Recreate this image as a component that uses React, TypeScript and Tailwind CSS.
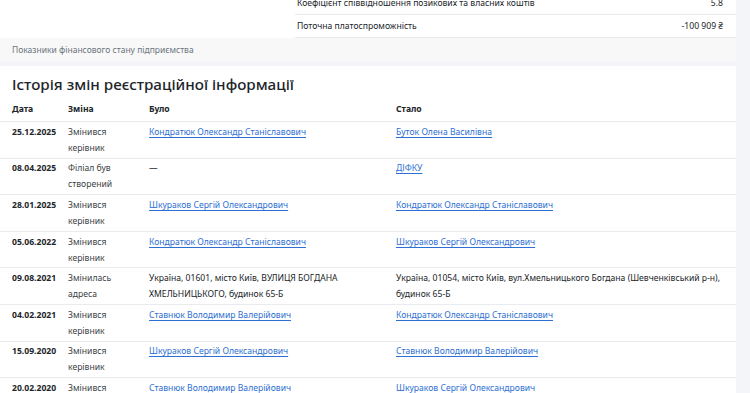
import React from "react";

const LINK = "text-[#2d6fd3] underline underline-offset-[1.5px] decoration-[1px]";

type Cell = { text: React.ReactNode; link?: boolean };
type Row = { date: string; change: React.ReactNode; was: Cell; now: Cell };

const rows: Row[] = [
  {
    date: "25.12.2025",
    change: <>Змінився<br />керівник</>,
    was: { text: "Кондратюк Олександр Станіславович", link: true },
    now: { text: "Буток Олена Василівна", link: true },
  },
  {
    date: "08.04.2025",
    change: <>Філіал був<br />створений</>,
    was: { text: "—" },
    now: { text: "ДІФКУ", link: true },
  },
  {
    date: "28.01.2025",
    change: <>Змінився<br />керівник</>,
    was: { text: "Шкураков Сергій Олександрович", link: true },
    now: { text: "Кондратюк Олександр Станіславович", link: true },
  },
  {
    date: "05.06.2022",
    change: <>Змінився<br />керівник</>,
    was: { text: "Кондратюк Олександр Станіславович", link: true },
    now: { text: "Шкураков Сергій Олександрович", link: true },
  },
  {
    date: "09.08.2021",
    change: <>Змінилась<br />адреса</>,
    was: { text: <>Україна, 01601, місто Київ, ВУЛИЦЯ БОГДАНА<br />ХМЕЛЬНИЦЬКОГО, будинок 65-Б</> },
    now: { text: <>Україна, 01054, місто Київ, вул.Хмельницького Богдана (Шевченківський р-н),<br />будинок 65-Б</> },
  },
  {
    date: "04.02.2021",
    change: <>Змінився<br />керівник</>,
    was: { text: "Ставнюк Володимир Валерійович", link: true },
    now: { text: "Кондратюк Олександр Станіславович", link: true },
  },
  {
    date: "15.09.2020",
    change: <>Змінився<br />керівник</>,
    was: { text: "Шкураков Сергій Олександрович", link: true },
    now: { text: "Ставнюк Володимир Валерійович", link: true },
  },
  {
    date: "20.02.2020",
    change: <>Змінився<br />керівник</>,
    was: { text: "Ставнюк Володимир Валерійович", link: true },
    now: { text: "Шкураков Сергій Олександрович", link: true },
  },
];

function CellView({ c }: { c: Cell }) {
  if (c.link) return <a href="#" className={LINK}>{c.text}</a>;
  return <span>{c.text}</span>;
}

export default function App() {
  return (
    <div
      className="w-[750px] h-[393px] overflow-hidden bg-[#f4f5f8] text-[#212529]"
      style={{ fontFamily: '"Noto Sans", "Open Sans", sans-serif' }}
    >
      <div className="w-[736px] -mt-[8px]">
        {/* top card */}
        <div className="bg-white">
          <div className="flex justify-end">
            <div className="w-[441px] text-[8.6px] leading-[16px]">
              <div className="flex justify-between border-b border-[#e9ebee] py-[3px] pl-[2px] pr-[13px]">
                <span>Коефіцієнт співвідношення позикових та власних коштів</span>
                <span>5.8</span>
              </div>
              <div className="flex justify-between border-b border-[#e9ebee] py-[3px] pl-[2px] pr-[13px]">
                <span>Поточна платоспроможність</span>
                <span>-100 909 ₴</span>
              </div>
            </div>
          </div>
          <div className="bg-[#f8f8f9] h-[24px] flex items-center px-[12px] text-[8.5px] text-[#6c757d]">
            Показники фінансового стану підприємства
          </div>
        </div>

        {/* history card */}
        <div className="bg-white mt-[4px] pt-[6px]">
          <h4 className="px-[12px] text-[15.2px] leading-[24px] font-medium text-[#212529]">
            Історія змін реєстраційної інформації
          </h4>
          <div className="text-[8.6px] leading-[16px]">
            <div className="grid grid-cols-[56px_81px_247px_1fr] pl-[12px] h-[26px] items-center border-b border-[#e9ebee] font-bold">
              <div>Дата</div>
              <div>Зміна</div>
              <div>Було</div>
              <div>Стало</div>
            </div>
            {rows.map((r, i) => (
              <div
                key={i}
                className="grid grid-cols-[56px_81px_247px_1fr] pl-[12px] py-[1.8px] border-b border-[#e9ebee]"
              >
                <div className="font-bold">{r.date}</div>
                <div className="text-[#3b3f44]">{r.change}</div>
                <div><CellView c={r.was} /></div>
                <div className="whitespace-nowrap"><CellView c={r.now} /></div>
              </div>
            ))}
          </div>
        </div>
      </div>
    </div>
  );
}
